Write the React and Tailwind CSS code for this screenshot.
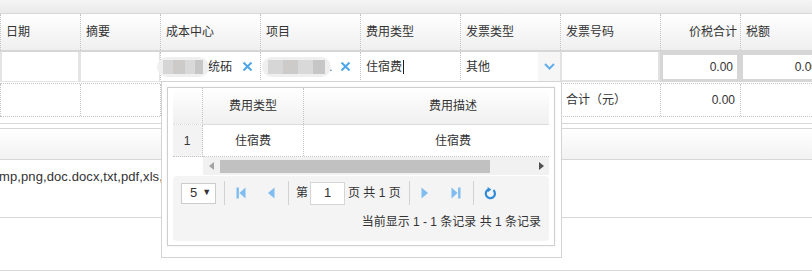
import React from "react";

const F = "font-['Liberation_Sans','Noto_Sans_CJK_SC',sans-serif]";

function XIcon({ className = "" }) {
  return (
    <svg width="9" height="9" viewBox="0 0 9 9" className={className}>
      <path d="M1.2 1.2 L7.8 7.8 M7.8 1.2 L1.2 7.8" stroke="#4ea6ea" strokeWidth="2" strokeLinecap="square" />
    </svg>
  );
}

function Blur({ widths }) {
  const shades = ["#d6d6d6", "#cdcaca", "#d9d9d9", "#c6c6c6", "#d3d3d3"];
  return (
    <div className="flex h-[20px] items-center rounded-full bg-[#efefef] px-[6px] blur-[0.6px]">
      {widths.map((w, i) => (
        <div key={i} style={{ width: w, background: shades[i % shades.length] }} className="h-[14px]" />
      ))}
    </div>
  );
}

function PagerIcon({ type }) {
  const c = "#7fbdf0";
  if (type === "first")
    return (
      <svg width="10" height="12" viewBox="0 0 10 12">
        <rect x="0.5" y="0.5" width="2.4" height="11" fill={c} />
        <path d="M9.5 0.5 L3.4 6 L9.5 11.5 Z" fill={c} />
      </svg>
    );
  if (type === "prev")
    return (
      <svg width="8" height="12" viewBox="0 0 8 12">
        <path d="M7.5 0.5 L1 6 L7.5 11.5 Z" fill={c} />
      </svg>
    );
  if (type === "next")
    return (
      <svg width="8" height="12" viewBox="0 0 8 12">
        <path d="M0.5 0.5 L7 6 L0.5 11.5 Z" fill={c} />
      </svg>
    );
  if (type === "last")
    return (
      <svg width="10" height="12" viewBox="0 0 10 12">
        <path d="M0.5 0.5 L6.6 6 L0.5 11.5 Z" fill={c} />
        <rect x="7.1" y="0.5" width="2.4" height="11" fill={c} />
      </svg>
    );
  return (
    <svg width="13" height="13" viewBox="0 0 13 13">
      <path d="M9.4 3.2 A4.6 4.6 0 1 1 4.6 2.4" fill="none" stroke="#2f8bd8" strokeWidth="2.2" />
      <path d="M3.6 0 L7.4 2.6 L3.8 5.2 Z" fill="#2f8bd8" />
    </svg>
  );
}

const cols = [
  { w: 80, label: "日期" },
  { w: 80, label: "摘要" },
  { w: 100, label: "成本中心" },
  { w: 100, label: "项目" },
  { w: 100, label: "费用类型" },
  { w: 100, label: "发票类型" },
  { w: 100, label: "发票号码" },
  { w: 80, label: "价税合计", right: true },
  { w: 72, label: "税额" },
];

export default function App() {
  return (
    <div className={`relative h-[276px] w-[812px] overflow-hidden bg-white text-[12px] text-[#333] ${F}`}>
      {/* top strip */}
      <div className="h-[14px] border-b border-[#d8d8d8] bg-linear-to-b from-[#f4f4f4] to-[#eaeaea]" />

      {/* header row */}
      <div className="flex h-[38px] border-b-2 border-[#d6d6d6] bg-linear-to-b from-white to-[#efefef]">
        {cols.map((c, i) => (
          <div
            key={i}
            style={{ width: c.w }}
            className={`flex shrink-0 items-center border-l border-dotted border-[#c4c4c4] pl-[5px] pb-[1px] ${c.right ? "justify-end pr-[3px]" : ""}`}
          >
            {c.label}
          </div>
        ))}
      </div>

      {/* edit row */}
      <div className="flex h-[30px]">
        <div className="w-[80px] shrink-0 border-x-2 border-b border-[#e4e4e4]" />
        <div className="w-[80px] shrink-0 border-l border-r border-b border-[#e4e4e4]" />
        <div className="flex w-[100px] shrink-0 items-center border-l border-dotted border-[#c4c4c4] border-b-[#dcdcdc] border-b">
          <div className="-ml-[4px]">
            <Blur widths={[10, 12, 10, 8]} />
          </div>
          <span className="-ml-[1px] overflow-hidden whitespace-nowrap">统砳</span>
          <XIcon className="ml-[11px]" />
        </div>
        <div className="flex w-[100px] shrink-0 items-center border-l border-dotted border-[#c4c4c4] border-b border-b-[#dcdcdc]">
          <div className="ml-[1px]">
            <Blur widths={[15, 15, 15, 12]} />
          </div>
          <span className="-ml-[2px]">.</span>
          <XIcon className="ml-[9px]" />
        </div>
        <div className="flex w-[100px] shrink-0 items-center border-l border-dotted border-[#c4c4c4] border-b border-b-[#dcdcdc] pl-[5px]">
          住宿费
          <div className="ml-[1px] h-[14px] w-px bg-[#222]" />
        </div>
        <div className="flex w-[100px] shrink-0 items-center border-l border-dotted border-[#c4c4c4] border-b border-b-[#dcdcdc] pl-[5px]">
          <span className="flex-1">其他</span>
          <div className="flex h-full w-[22px] items-center justify-center bg-[#f6f6f6]">
            <svg width="11" height="7" viewBox="0 0 11 7">
              <path d="M1 1 L5.5 5.5 L10 1" fill="none" stroke="#64aeea" strokeWidth="2" />
            </svg>
          </div>
        </div>
        <div className="w-[100px] shrink-0 border-x-2 border-b-2 border-[#e2e2e2]" />
        <div className="flex w-[80px] shrink-0 items-center justify-end border-[3px] border-[#d6d6d6] pr-[4px]">0.00</div>
        <div className="flex w-[72px] shrink-0 items-center justify-end overflow-hidden border-[3px] border-r-0 border-[#d6d6d6]">
          <span className="-mr-[6px] whitespace-nowrap">0.00</span>
        </div>
      </div>

      {/* summary row */}
      <div className="mt-[1px] flex h-[34px] border-y border-dotted border-[#c4c4c4]">
        <div className="w-[80px] shrink-0 border-l border-dotted border-[#c4c4c4]" />
        <div className="w-[80px] shrink-0 border-l border-dotted border-[#c4c4c4]" />
        <div className="w-[400px] shrink-0 border-l border-dotted border-[#c4c4c4]" />
        <div className="flex w-[100px] shrink-0 items-center border-l border-dotted border-[#c4c4c4] pl-[5px]">合计（元）</div>
        <div className="flex w-[80px] shrink-0 items-center justify-end border-l border-dotted border-[#c4c4c4] pr-[5px]">0.00</div>
        <div className="w-[72px] shrink-0 border-l border-dotted border-[#c4c4c4]" />
      </div>

      {/* attachment panel */}
      <div className="mt-[6px] border-t border-[#d8d8d8] pt-[4px]">
        <div className="h-[32px] border-y border-[#d6d6d6] bg-linear-to-b from-white to-[#f2f2f2]" />
        <div className="h-[58px] border-b border-[#d6d6d6] pt-[7px]">
          <div className="-ml-[1px] whitespace-nowrap text-[13px] tracking-[0.1px] text-[#333]">mp,png,doc.docx,txt,pdf,xls,xlsx</div>
        </div>
      </div>
      <div className="mt-[52px] h-[6px] border-t border-[#d8d8d8]" />
      <div className="border-t border-[#d8d8d8]" />

      {/* dropdown popup */}
      <div className="absolute left-[161px] top-[81px] h-[177px] w-[401px] border border-[#d4d4d4] bg-white pl-[5px] pt-[5px]">
        <div className="h-[159px] w-[388px] border border-[#cfcfcf] pl-[5px] shadow-[0_0_2px_rgba(0,0,0,0.08)]">
          <div className="flex">
            <div className="w-[30px] shrink-0">
              <div className="h-[37px] border-r border-dotted border-[#c4c4c4] border-b border-b-[#dcdcdc] bg-linear-to-b from-white to-[#f0f0f0]" />
              <div className="flex h-[32px] items-center justify-center border-r border-dotted border-[#c4c4c4] border-b bg-[#f3f3f3] pr-[1px]">1</div>
            </div>
            <div className="w-[346px] shrink-0 overflow-hidden">
              <div className="flex h-[37px] w-[400px] border-b border-[#dcdcdc] bg-linear-to-b from-white to-[#f0f0f0]">
                <div className="flex w-[101px] shrink-0 items-center justify-center border-r border-dotted border-[#c4c4c4]">费用类型</div>
                <div className="flex w-[298px] shrink-0 items-center justify-center">费用描述</div>
              </div>
              <div className="flex h-[32px] w-[400px] border-b border-dotted border-[#c4c4c4]">
                <div className="flex w-[101px] shrink-0 items-center justify-center border-r border-dotted border-[#c4c4c4]">住宿费</div>
                <div className="flex w-[298px] shrink-0 items-center justify-center">住宿费</div>
              </div>
              <div className="flex h-[18px] items-center bg-[#f1f1f1]">
                <svg width="5" height="8" viewBox="0 0 5 8" className="ml-[6px]">
                  <path d="M5 0 L0 4 L5 8 Z" fill="#a3a3a3" />
                </svg>
                <div className="ml-[6px] h-[13px] w-[270px] bg-[#c1c1c1]" />
                <div className="flex-1" />
                <svg width="5" height="8" viewBox="0 0 5 8" className="mr-[5px]">
                  <path d="M0 0 L5 4 L0 8 Z" fill="#505050" />
                </svg>
              </div>
            </div>
          </div>

          {/* pager */}
          <div className="mt-[1px] h-[65px] w-[376px] rounded-[4px] bg-[#f4f4f4] pl-[8px] pt-[5px]">
            <div className="flex h-[24px] items-center">
              <div className="flex h-[21px] w-[35px] items-center border border-[#cccccc] bg-white pl-[8px] text-[13px]">
                5<span className="ml-[5px] text-[9px]">▼</span>
              </div>
              <div className="ml-[8px] h-[24px] w-px bg-[#d2d2d2]" />
              <div className="flex w-[31px] justify-center"><PagerIcon type="first" /></div>
              <div className="flex w-[30px] justify-center"><PagerIcon type="prev" /></div>
              <div className="ml-[2px] h-[24px] w-px bg-[#d2d2d2]" />
              <span className="ml-[7px]">第</span>
              <div className="ml-[2px] flex h-[23px] w-[35px] items-center justify-center border border-[#d6d6d6] bg-white text-[13px]">1</div>
              <span className="ml-[3px] whitespace-nowrap">页 共 1 页</span>
              <div className="ml-[8px] h-[24px] w-px bg-[#d2d2d2]" />
              <div className="flex w-[31px] justify-center"><PagerIcon type="next" /></div>
              <div className="flex w-[30px] justify-center"><PagerIcon type="last" /></div>
              <div className="ml-[2px] h-[24px] w-px bg-[#d2d2d2]" />
              <div className="flex w-[34px] justify-center"><PagerIcon type="refresh" /></div>
            </div>
            <div className="mt-[9px] pr-[8px] text-right leading-[16px]">当前显示 1 - 1 条记录 共 1 条记录</div>
          </div>
        </div>
      </div>
    </div>
  );
}
